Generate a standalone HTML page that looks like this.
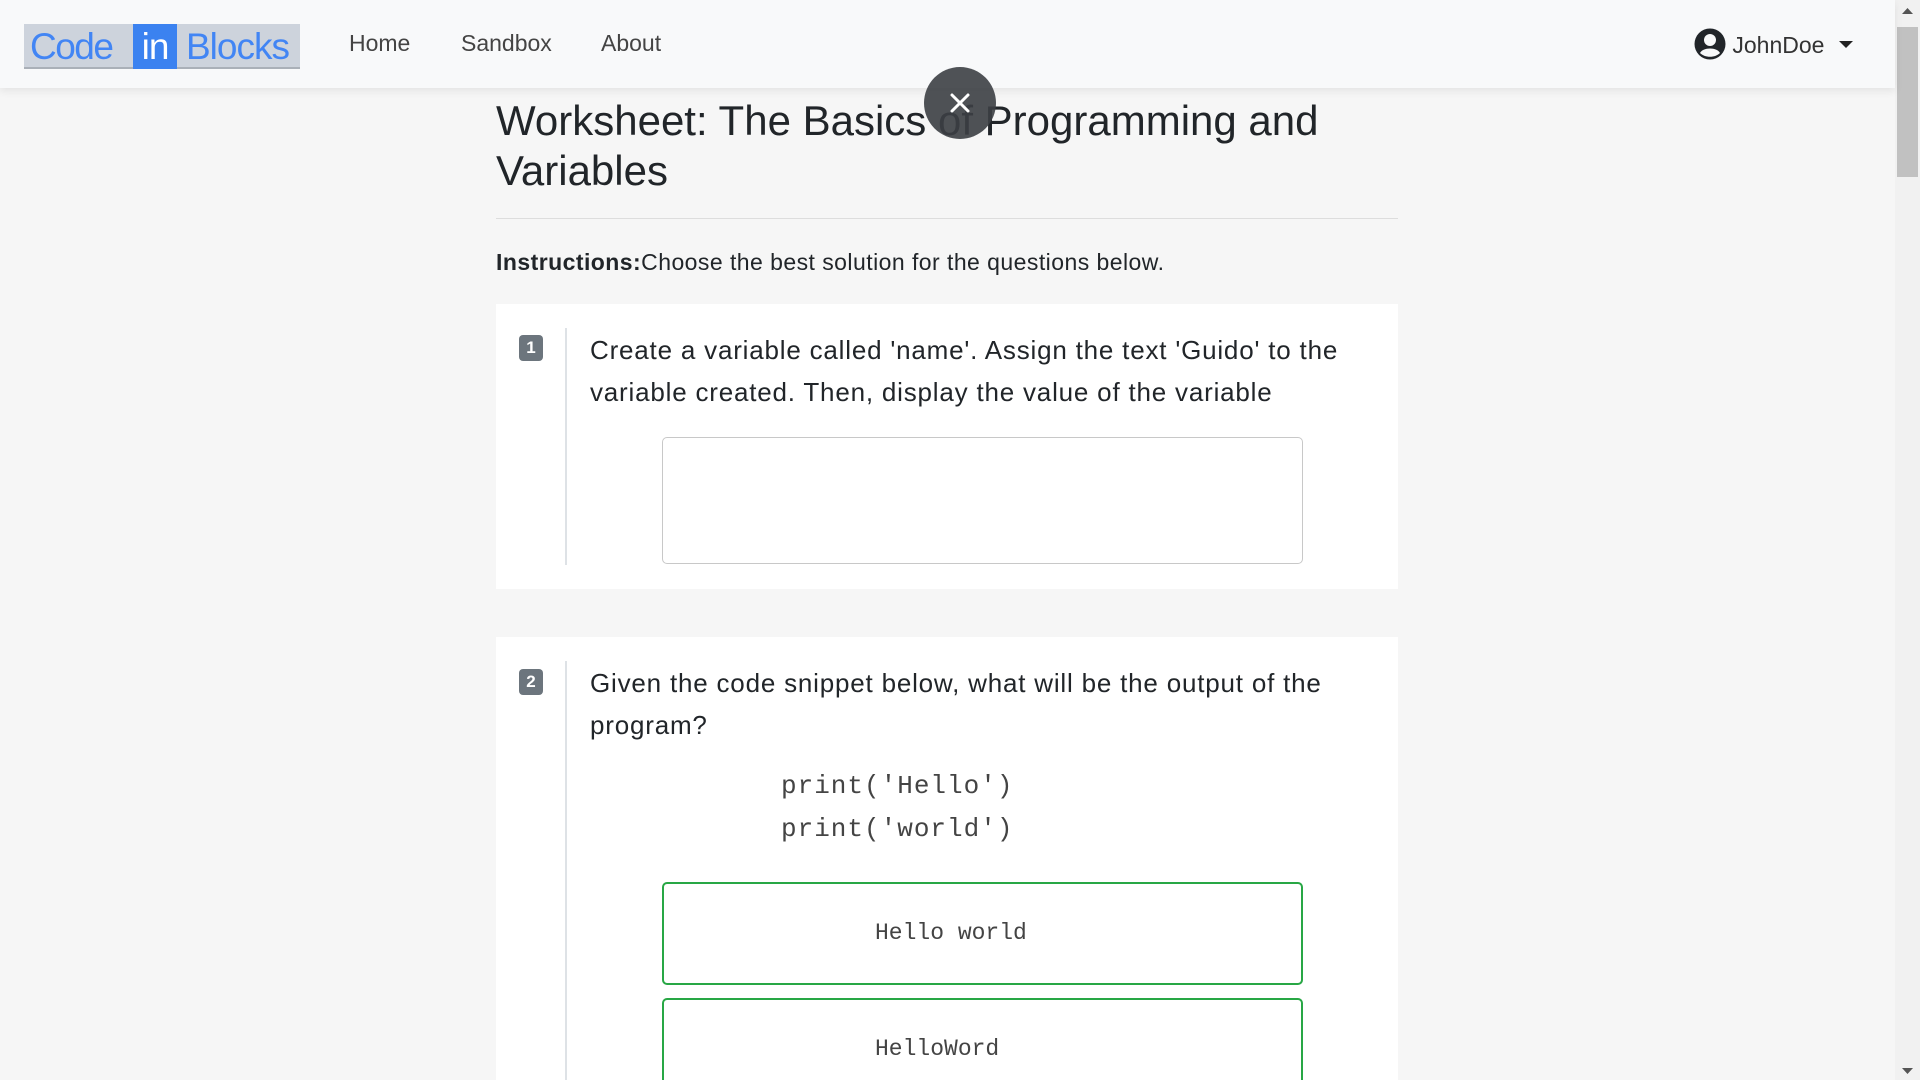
<!DOCTYPE html>
<html><head><meta charset="utf-8">
<style>
*{box-sizing:border-box;margin:0;padding:0}
html,body{width:1920px;height:1080px;overflow:hidden}
body{background:#f6f6f6;font-family:"Liberation Sans",sans-serif;color:#212529;position:relative}
.nav{position:absolute;left:0;top:0;width:1895px;height:88px;background:#f8f9fa;box-shadow:0 3px 8px rgba(0,0,0,.08);z-index:2}
.logo{position:absolute;left:24px;top:24px;width:276px;height:45px;background:#cdd3dc;border-bottom:2px solid #aab0b8}
.logo span{position:absolute;top:0;font-size:37px;line-height:45px;color:#4285f4;letter-spacing:-1px}
.logo .in{left:109px;width:44px;height:45px;background:#3b82f0;color:#fff;text-align:center}
.nav a{position:absolute;top:30px;font-size:23px;color:#444;text-decoration:none}
.user{position:absolute;left:1694px;top:28px;font-size:23px;color:#333}
.sb{position:absolute;right:0;top:0;width:25px;height:1080px;background:#f1f1f1}
.sb .th{position:absolute;left:2px;top:27px;width:21px;height:150px;background:#c1c1c1}
.title{position:absolute;left:496px;top:96px;width:880px;font-size:42px;line-height:50px;color:#212529}
.hr{position:absolute;left:496px;top:218px;width:902px;height:1px;background:#ddd}
.instr{position:absolute;left:496px;top:249px;font-size:23px;letter-spacing:.45px}
.card{position:absolute;left:496px;width:902px;background:#fff}
.badge{position:absolute;left:23px;width:24px;height:26px;background:#6c757d;color:#fff;border-radius:4px;font-size:17px;font-weight:bold;text-align:center;line-height:26px}
.vl{position:absolute;left:69px;width:2px;background:#dee2e6}
.q{position:absolute;left:94px;width:800px;font-size:26px;line-height:42px;color:#212529;letter-spacing:.8px}
.box{position:absolute;left:166px;width:641px;border-radius:5px;background:#fff}
.code{position:absolute;left:285px;font-family:"Liberation Mono",monospace;font-size:26px;line-height:43px;color:#444;letter-spacing:1px}
.opt{font-family:"Liberation Mono",monospace;font-size:23px;color:#444;position:absolute;left:211px}
.close{position:absolute;left:924px;top:67px;width:72px;height:72px;border-radius:50%;background:rgba(60,63,68,.9);z-index:3}
</style></head><body>
<div class="nav">
  <div class="logo"><span style="left:6px;letter-spacing:-1.5px">Code</span><span class="in">in</span><span style="left:162px">Blocks</span></div>
  <a style="left:349px">Home</a><a style="left:461px">Sandbox</a><a style="left:601px">About</a>
  <div class="user"><svg width="32" height="32" viewBox="0 0 32 32" style="vertical-align:-7px"><circle cx="16" cy="16" r="15.5" fill="#212529"/><circle cx="16" cy="12" r="6" fill="#f8f9fa"/><path d="M6 25c3-6 17-6 20 0c-5 5-15 5-20 0z" fill="#f8f9fa"/></svg> JohnDoe <svg width="14" height="10" viewBox="0 0 14 10" style="margin-left:8px;vertical-align:3px"><path d="M0 1h14L7 8z" fill="#222"/></svg></div>
</div>
<div class="sb"><svg width="25" height="20" style="position:absolute;top:2px"><path d="M7 12l5.5-6 5.5 6z" fill="#555"/></svg><div class="th"></div><svg width="25" height="20" style="position:absolute;bottom:0"><path d="M7 8l5.5 6 5.5-6z" fill="#555"/></svg></div>
<div class="close"><svg width="72" height="72"><path d="M28 28l16 16M44 28l-16 16" stroke="#fff" stroke-width="3" stroke-linecap="round"/></svg></div>
<div class="title">Worksheet: The Basics of Programming and Variables</div>
<div class="hr"></div>
<div class="instr"><b>Instructions:</b>Choose the best solution for the questions below.</div>
<div class="card" style="top:304px;height:285px">
  <div class="badge" style="top:31px">1</div>
  <div class="vl" style="top:24px;height:237px"></div>
  <div class="q" style="top:25px">Create a variable called 'name'. Assign the text 'Guido' to the variable created. Then, display the value of the variable</div>
  <div class="box" style="top:133px;height:127px;border:1.5px solid #c8c8c8"></div>
</div>
<div class="card" style="top:637px;height:443px">
  <div class="badge" style="top:32px">2</div>
  <div class="vl" style="top:24px;height:420px"></div>
  <div class="q" style="top:25px">Given the code snippet below, what will be the output of the program?</div>
  <div class="code" style="top:128px">print('Hello')<br>print('world')</div>
  <div class="box" style="top:245px;height:103px;border:2px solid #28a745"><div class="opt" style="top:36px">Hello world</div></div>
  <div class="box" style="top:361px;height:120px;border:2px solid #28a745"><div class="opt" style="top:36px">HelloWord</div></div>
</div>
</body></html>
